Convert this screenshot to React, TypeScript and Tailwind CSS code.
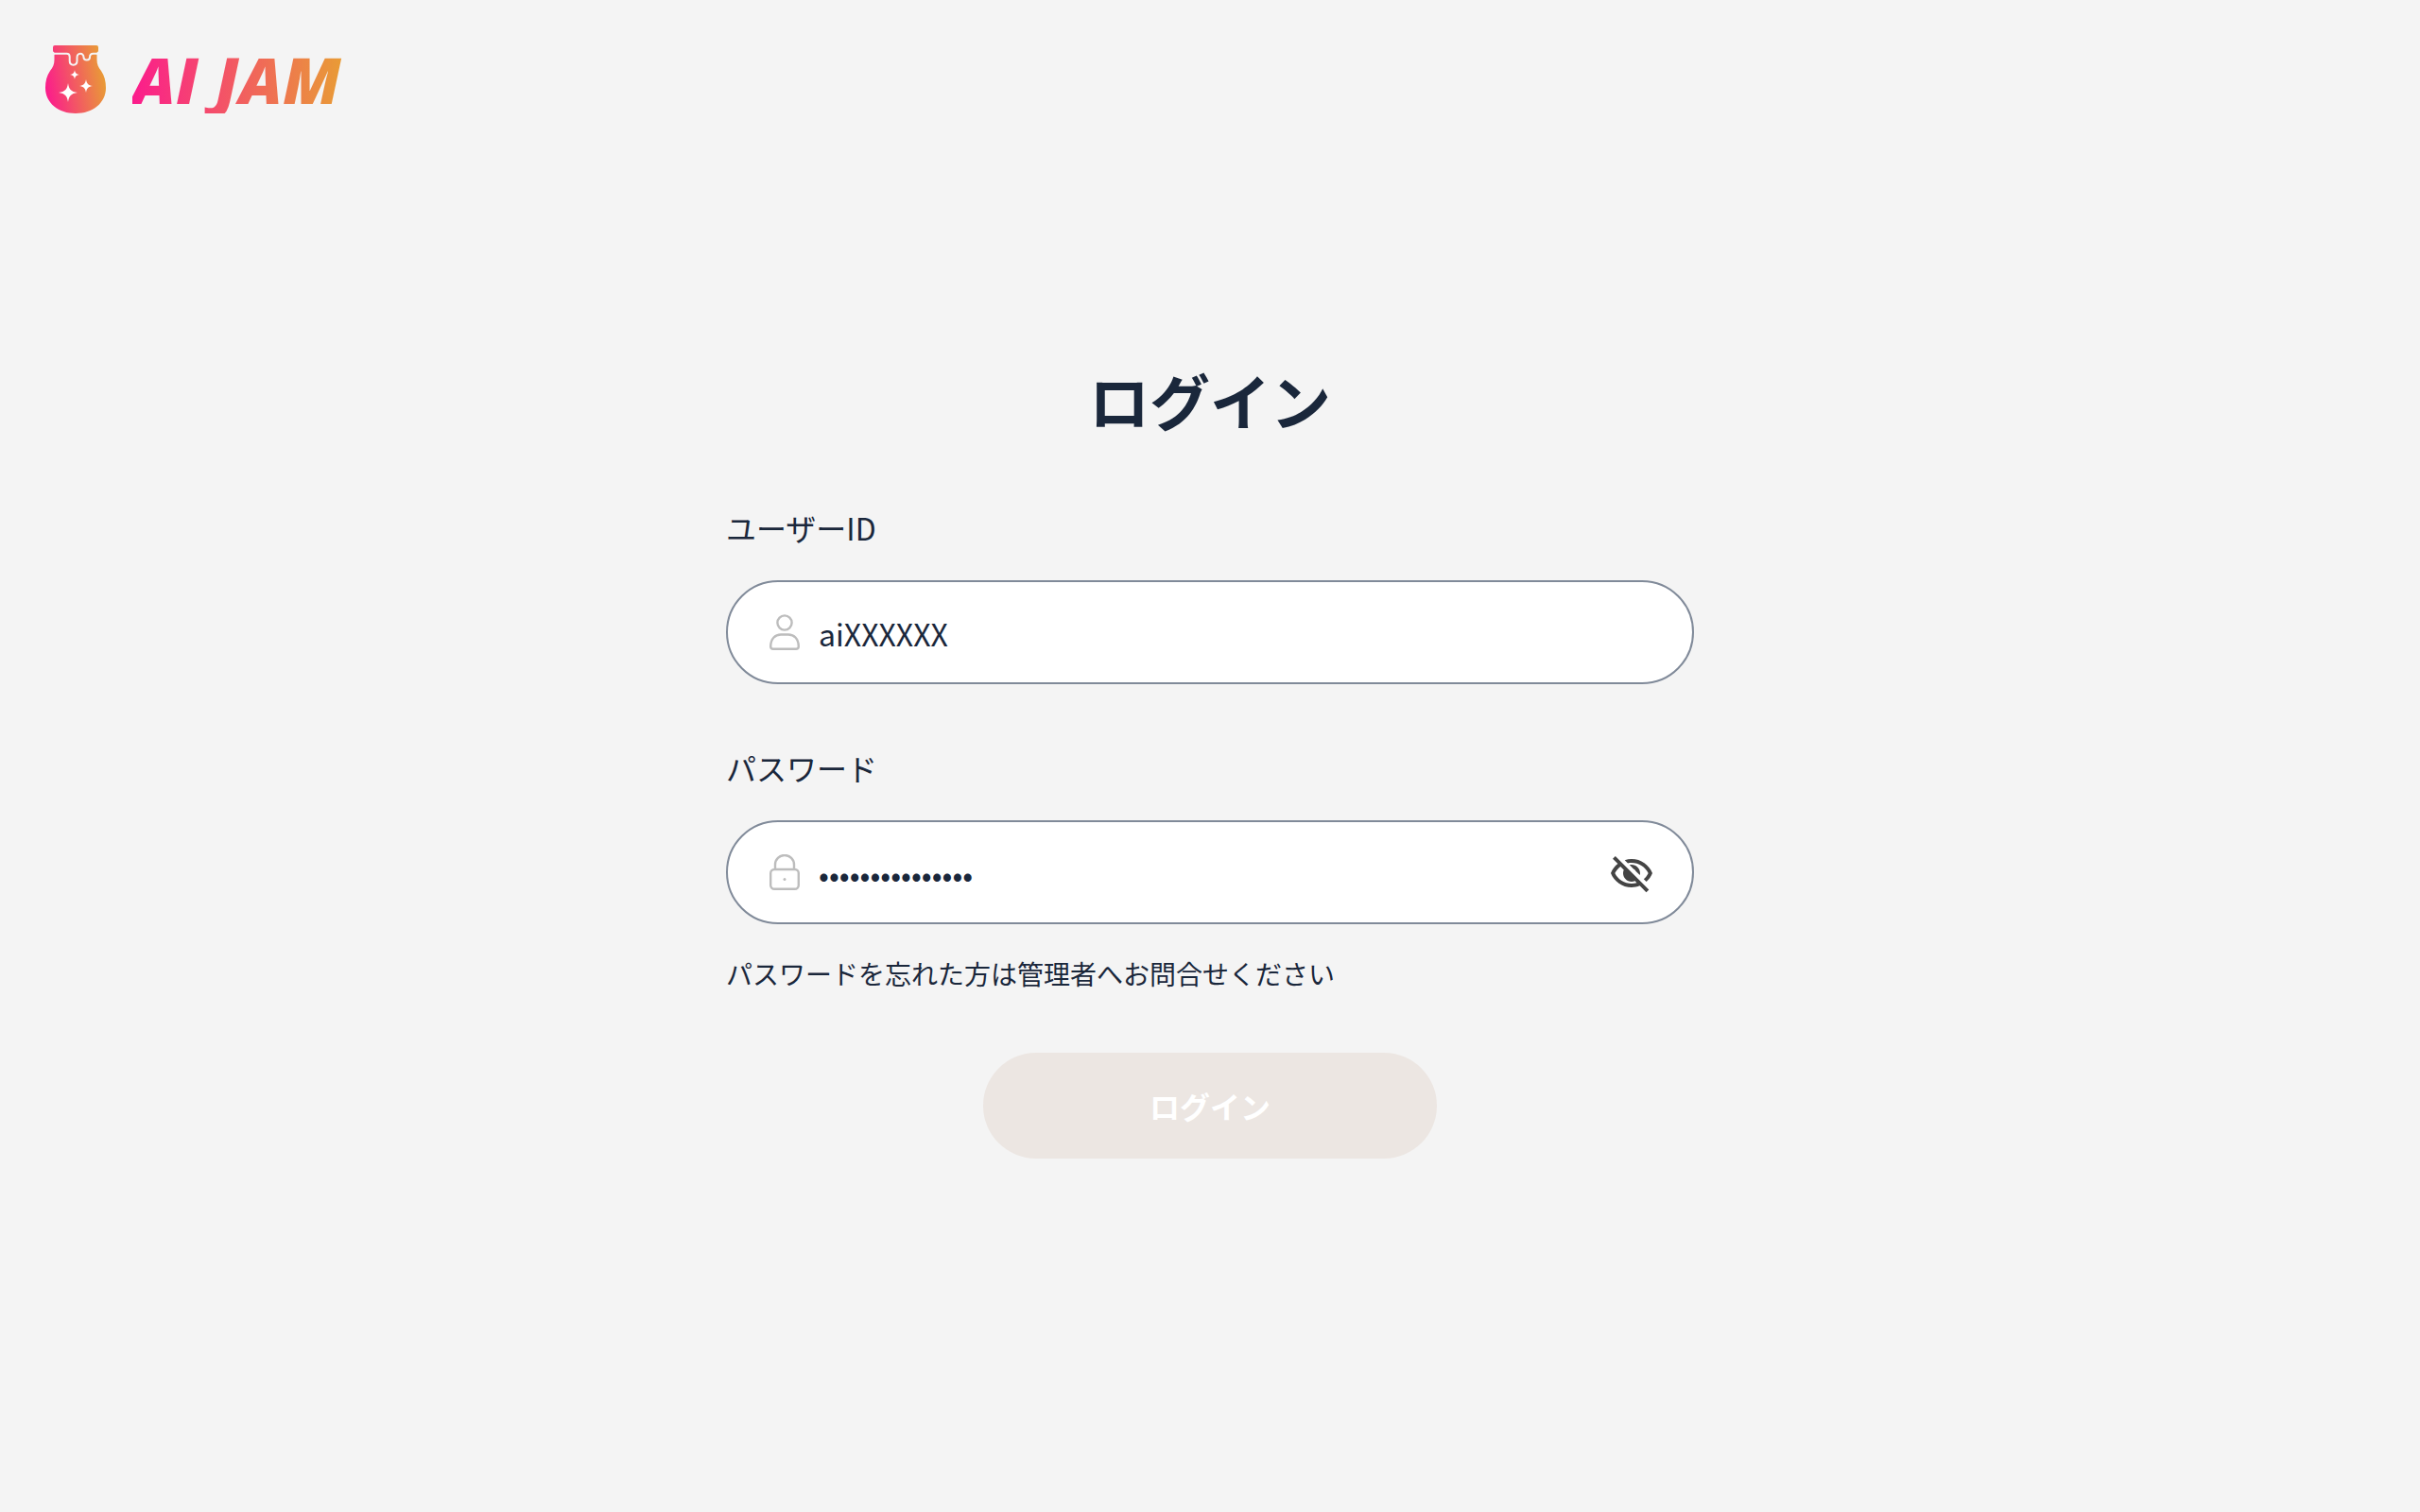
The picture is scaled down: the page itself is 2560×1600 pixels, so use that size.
import { useState } from "react";
import type { ReactNode } from "react";
import { MdOutlineVisibility } from "react-icons/md";

function JarMark() {
  return (
    <svg viewBox="0 0 64 72" className="h-18 w-16" aria-hidden="true">
      <defs>
        <linearGradient id="jar" x1="0" y1="0.6" x2="1" y2="0.4">
          <stop offset="0" stopColor="#fb1c8c" />
          <stop offset="1" stopColor="#e8a033" />
        </linearGradient>
      </defs>
      <path
        fill="url(#jar)"
        d="M10 0h44a2 2 0 0 1 2 2v3.5a2 2 0 0 1-1.5 2V15c0 5 1.500 8 4.500 12 3.500 5 5 11 5 18 0 16-14 27-32 27S0 61 0 45c0-7 1.500-13 5-18 3-4 4.500-7 4.500-12V7.500A2 2 0 0 1 8 5.500V2a2 2 0 0 1 2-2z"
      />
      <path
        fill="none"
        stroke="#f4f4f4"
        strokeWidth="2"
        d="M8 9.500Q8.500 8.700 10 8.700H22.500C25 8.700 25.700 10 25.700 12V16.500C25.700 22 33.500 22 33.500 16.500V13C33.500 7.500 40.500 7.500 40.500 12.500 40.500 16.500 47 16.500 47 12.500 47 10 48.500 8.700 50.500 8.700H54Q55.500 8.700 56 9.500"
      />
      <g fill="#fff">
        <path d="M24 40C25 46.500 27 49 34 50 27 51 25 53.500 24 60 23 53.500 21 51 14 50 21 49 23 46.500 24 40z" />
        <path d="M43 36C43.700 40.500 45.500 42.300 50 43 45.500 43.700 43.700 45.500 43 50 42.300 45.500 40.500 43.700 36 43 40.500 42.300 42.300 40.500 43 36z" />
        <path d="M31 26C31.500 29.300 32.700 30.500 36 31 32.700 31.500 31.500 32.700 31 36 30.500 32.700 29.300 31.500 26 31 29.300 30.500 30.500 29.300 31 26z" />
      </g>
    </svg>
  );
}

function UserIcon() {
  return (
    <svg viewBox="0 0 32 38" className="h-[38px] w-8 shrink-0" fill="none" stroke="#bdbdbd" strokeWidth="2.4" aria-hidden="true">
      <circle cx="16" cy="9" r="7.600" />
      <path d="M1.200 34C1.200 26 6 21.500 12 21.500H20C26 21.500 30.800 26 30.800 34Q30.800 36.800 28 36.800H4Q1.200 36.800 1.200 34z" />
    </svg>
  );
}

function LockIcon() {
  return (
    <svg viewBox="0 0 32 38" className="h-[38px] w-8 shrink-0" fill="none" stroke="#bdbdbd" strokeWidth="2.4" aria-hidden="true">
      <path d="M6 16V11a10 10 0 0 1 20 0V16" />
      <rect x="1.200" y="16" width="29.600" height="20.800" rx="4" />
      <circle cx="16" cy="26.500" r="1.500" fill="#bdbdbd" stroke="none" />
    </svg>
  );
}

function EyeOffIcon() {
  return (
    <svg viewBox="0 0 24 24" className="size-12" fill="currentColor" aria-hidden="true">
      <path d="M12 6c3.790 0 7.170 2.130 8.820 5.500-.59 1.220-1.420 2.270-2.410 3.120l1.410 1.410c1.390-1.230 2.490-2.770 3.180-4.530C21.270 7.110 17 4 12 4c-1.270 0-2.490.2-3.640.57l1.650 1.650C10.660 6.090 11.320 6 12 6z" />
      <path d="M10.930 7.140L13 9.210c.57.25 1.030.71 1.280 1.280l2.070 2.070c.08-.34.14-.7.14-1.070C16.500 9.010 14.480 7 12 7c-.37 0-.72.05-1.070.14z" />
      <path d="M2.010 3.870l2.680 2.680C3.060 7.830 1.770 9.530 1 11.500 2.730 15.890 7 19 12 19c1.520 0 2.980-.29 4.320-.82l3.420 3.420 1.410-1.410L3.420 2.450 2.010 3.870zM6.110 7.970l1.750 1.750C7.630 10.270 7.500 10.870 7.500 11.500 7.500 13.980 9.520 16 12 16c.63 0 1.230-.13 1.770-.36l.98.98c-.88.24-1.800.38-2.750.38-3.790 0-7.170-2.130-8.820-5.500.7-1.430 1.720-2.610 2.930-3.530z" />
    </svg>
  );
}

type FieldProps = {
  id: string;
  label: string;
  type: string;
  value: string;
  onChange: (value: string) => void;
  icon: ReactNode;
  action?: ReactNode;
};

function Field({ id, label, type, value, onChange, icon, action }: FieldProps) {
  return (
    <div className="flex flex-col gap-8">
      <label htmlFor={id} className="text-[32px] leading-[48px]">
        {label}
      </label>
      <div className="flex h-[110px] items-center gap-5 rounded-full border-2 border-[#808a99] bg-white pr-10 pl-11">
        {icon}
        <input
          id={id}
          type={type}
          value={value}
          onChange={(event) => onChange(event.target.value)}
          className="min-w-0 flex-1 bg-transparent pt-0.5 text-[32px] leading-[48px] outline-none"
        />
        {action}
      </div>
    </div>
  );
}

export default function App() {
  const [userId, setUserId] = useState("aiXXXXXX");
  const [password, setPassword] = useState("password1234567");
  const [visible, setVisible] = useState(false);

  return (
    <div className="min-h-screen bg-[#f4f4f4] font-['Noto_Sans_CJK_JP',sans-serif] text-[#1a273b]">
      <header className="flex items-center gap-7 px-12 pt-12">
        <JarMark />
        <span className="bg-linear-to-r/srgb from-[#fb1c8c] to-[#e8a033] bg-clip-text pr-2 font-['Open_Sans',sans-serif] text-[68px] leading-[72px] font-extrabold text-transparent italic">
          AI JAM
        </span>
      </header>
      <main className="mx-auto flex w-full max-w-5xl flex-col pt-[254px]">
        <h1 className="text-center text-[64px] leading-24 font-bold">ログイン</h1>
        <form className="flex flex-col pt-16" onSubmit={(event) => event.preventDefault()}>
          <div className="flex flex-col gap-16">
            <Field id="user-id" label="ユーザーID" type="text" value={userId} onChange={setUserId} icon={<UserIcon />} />
            <Field
              id="password"
              label="パスワード"
              type={visible ? "text" : "password"}
              value={password}
              onChange={setPassword}
              icon={<LockIcon />}
              action={
                <button type="button" aria-label="パスワードの表示切替" onClick={() => setVisible(!visible)} className="pt-1 text-[#444]">
                  {visible ? <MdOutlineVisibility size={48} /> : <EyeOffIcon />}
                </button>
              }
            />
          </div>
          <p className="pt-8 text-[28px] leading-10">パスワードを忘れた方は管理者へお問合せください</p>
          <button type="submit" disabled className="mt-16 h-28 w-[480px] self-center rounded-full bg-[#ece6e2] text-[32px] font-bold text-white">
            ログイン
          </button>
        </form>
      </main>
    </div>
  );
}
